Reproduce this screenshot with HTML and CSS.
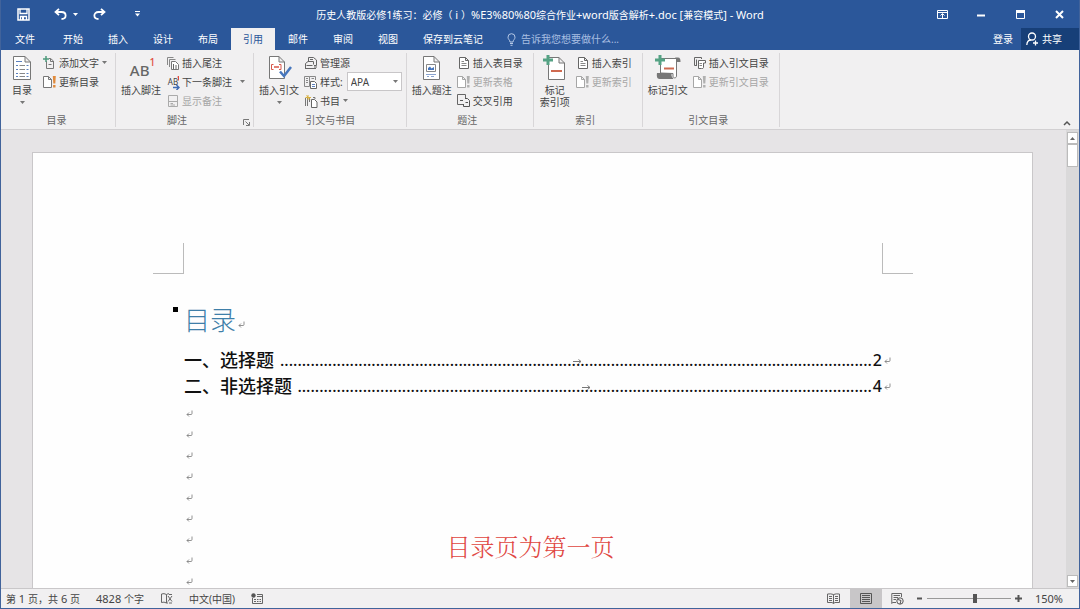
FILE: index.html
```html
<!DOCTYPE html>
<html lang="zh-CN">
<head>
<meta charset="utf-8">
<title>Word</title>
<link rel="stylesheet" href="styles.css">
</head>
<body>
<svg class="defs" aria-hidden="true">
  <symbol id="ret" viewBox="0 0 7 7"><path d="M6 .5V3.500Q6 4.500 5 4.500H1M3 2.500 1 4.500 3 6.500" fill="none" stroke="currentColor" stroke-width=".8"/></symbol>
  <symbol id="tabarrow" viewBox="0 0 9 5"><path d="M0 2.500H8M5.500.5 8 2.500 5.500 4.500" fill="none" stroke="currentColor"/></symbol>
  <symbol id="down" viewBox="0 0 5 3"><path d="M0 0H5L2.500 3Z" fill="currentColor"/></symbol>
  <symbol id="update" viewBox="0 0 14 14"><path d="M.5 1.500H5.500L8.500 4.500V12.500H.5ZM5.500 1.500V4.500H8.500" fill="#fff" stroke="currentColor"/><path d="M9.800 1h3l-.5 7.500h-2zM10.100 10h2.400v2.500h-2.400z" fill="var(--mark)"/></symbol>
  <symbol id="list" viewBox="0 0 14 14"><path d="M2.500 1.500H8.500L11.500 4.500V12.500H2.500ZM8.500 1.500V4.500H11.500" fill="#fff" stroke="#666"/><path d="M4.500 5.500H7M4.500 7.500H9.500M4.500 9.500H9.500" stroke="#888"/></symbol>
</svg>
<div class="window">
  <header class="titlebar">
    <div class="quick">
      <button aria-label="保存"><svg width="13" height="13" viewBox="0 0 13 13"><path d="M1 1H12V12H1Z" fill="none" stroke="#fff" stroke-width="1.500"/><path d="M3 1V5.500H10V1M3.500 12V8.500H9.500V12" fill="none" stroke="#fff" stroke-width="1.300"/><path d="M5 9h2v3H5z" fill="#fff"/></svg></button>
      <button class="undo" aria-label="撤消"><svg width="13" height="12" viewBox="0 0 13 12"><path d="M5 .8 1.500 4 5 7.200M2 4H7.500C13 4 13 11 7.500 11" fill="none" stroke="#fff" stroke-width="1.800"/></svg><svg class="caret" width="5" height="3"><use href="#down"/></svg></button>
      <button aria-label="恢复"><svg width="13" height="12" viewBox="0 0 13 12"><path d="M8 .8 11.500 4 8 7.200M11 4H5.500C0 4 0 11 5.500 11" fill="none" stroke="#fff" stroke-width="1.800"/></svg></button>
      <button class="more" aria-label="自定义快速访问工具栏"><svg width="5" height="6" viewBox="0 0 5 6"><path d="M0 .5H5" stroke="#fff"/><path d="M0 2.500H5L2.500 5.500Z" fill="#fff"/></svg></button>
    </div>
    <h1>历史人教版必修<span class="latin">1</span>练习：必修（<span class="latin"> i </span>）<span class="latin">%E3%80%80</span>综合作业<span class="latin">+word</span>版含解析<span class="latin">+.doc [</span>兼容模式<span class="latin">] - Word</span></h1>
    <div class="controls">
      <button aria-label="功能区显示选项"><svg width="11" height="9" viewBox="0 0 11 9"><path d="M.5.5H10.500V8.500H.5ZM.5 2.500H10.500M5.500 8V4M3.500 5.500 5.500 3.500 7.500 5.500" fill="none" stroke="#fff"/></svg></button>
      <button aria-label="最小化"><svg width="9" height="9"><path d="M0 5.500H8" stroke="#fff" stroke-width="2"/></svg></button>
      <button aria-label="最大化"><svg width="9" height="9"><path d="M.5.5H8.500V8.500H.5Z" fill="none" stroke="#fff"/><path d="M0 0H9V3H0Z" fill="#fff"/></svg></button>
      <button aria-label="关闭"><svg width="9" height="9"><path d="M1 1 8 8M8 1 1 8" stroke="#fff" stroke-width="2"/></svg></button>
    </div>
  </header>
  <nav class="tabs">
    <button class="file">文件</button><button>开始</button><button>插入</button><button>设计</button><button>布局</button><button class="active">引用</button><button>邮件</button><button>审阅</button><button>视图</button><button>保存到云笔记</button>
    <label class="tell"><svg width="9" height="13" viewBox="0 0 9 13"><path d="M3 9C3 7 1 6.500 1 4.200A3.500 3.500 0 0 1 8 4.200C8 6.500 6 7 6 9ZM3 10.500H6M3.500 12.300H5.500" fill="none" stroke="#b5c8e6"/></svg><input type="text" aria-label="告诉我您想要做什么" placeholder="告诉我您想要做什么..."></label>
    <button class="login">登录</button>
    <button class="share"><svg width="13" height="14" viewBox="0 0 13 14"><circle cx="6" cy="4.500" r="3.500" fill="none" stroke="#fff" stroke-width="1.300"/><path d="M.8 13C1 9.500 3 8 5 8M9.500 8.500V13.500M7 11H12" fill="none" stroke="#fff" stroke-width="1.300"/></svg>共享</button>
  </nav>
  <section class="ribbon">
    <div class="group">
      <div class="tools">
        <button class="large"><svg width="20" height="26" viewBox="0 0 20 26"><path d="M1.500 1.500H13L18.500 7V24.500H1.500ZM13 1.500V7H18.500" fill="#fff" stroke="#777"/><path d="M4 6.500H10M4 10.500H6M4 14.500H6M4 18.500H6M4 21.500H6" stroke="#5b7fbd"/><path d="M7.500 10.500H13M7.500 14.500H13M7.500 18.500H13M7.500 21.500H13" stroke="#888"/><path d="M14.500 10.500H16.500M14.500 14.500H16.500M14.500 18.500H16.500M14.500 21.500H16.500" stroke="#5b7fbd"/></svg><span>目录</span><svg class="caret" width="5" height="3"><use href="#down"/></svg></button>
        <div class="column">
          <button class="small"><svg width="14" height="14" viewBox="0 0 14 14"><path d="M3.500 5V12.500H10.500V5L7.500 2.500H6M7.500 2.500V5.500H10.500M5.500 8.500H8.500" fill="none" stroke="#777"/><path d="M3 0V6M0 3H6" stroke="#4e9a7c" stroke-width="1.500"/></svg>添加文字<svg class="caret" width="5" height="3"><use href="#down"/></svg></button>
          <button class="small"><svg class="hot" width="14" height="14"><use href="#update"/></svg>更新目录</button>
        </div>
      </div>
      <h2>目录</h2>
    </div>
    <div class="group notes">
      <div class="tools">
        <button class="large"><span class="ab">AB<sup>1</sup></span><span>插入脚注</span></button>
        <div class="column">
          <button class="small"><svg width="14" height="14" viewBox="0 0 14 14"><path d="M1.500 9V1.500H7.500M3.500 11V3.500H9.500" fill="none" stroke="#888"/><path d="M5.500 5.500H9.500L12.500 8.500V13.500H5.500Z" fill="#fff" stroke="#777"/><path d="M7.500 8V13M10 9V13" stroke="#666"/></svg>插入尾注</button>
          <button class="small wide"><span class="abmini">AB<svg width="14" height="14" viewBox="0 0 14 14"><path d="M12.500 0V4.500M11.300 1.200 12.500.5" stroke="#e04c3e"/><path d="M7 11.500H13M10.500 9 13 11.500 10.500 14" fill="none" stroke="#3f6cb4" stroke-width="1.500"/></svg></span>下一条脚注<svg class="caret" width="5" height="3"><use href="#down"/></svg></button>
          <button class="small" disabled><svg width="14" height="14" viewBox="0 0 14 14"><path d="M2.500 1.500H11.500V12.500H2.500ZM2.500 7.500H11.500M4.500 9.500H7M4.500 11H9" fill="none" stroke="#aaa"/></svg>显示备注</button>
        </div>
      </div>
      <h2>脚注</h2>
      <button class="launcher" aria-label="脚注和尾注"><svg width="7" height="7"><path d="M.5 6V.5H6M2.500 2.500 6 6M6.500 3V6.500H3" fill="none" stroke="#777"/></svg></button>
    </div>
    <div class="group cite">
      <div class="tools">
        <button class="large"><svg width="26" height="26" viewBox="0 0 26 26"><path d="M3.500 1.500H13L18.500 7V23.500H3.500ZM13 1.500V7H18.500" fill="#fff" stroke="#777"/><path d="M7.500 9.500H5.500V14.500H7.500M13 9.500H15V14.500H13" fill="none" stroke="#d8574a"/><path d="M8 12H13" stroke="#d8574a" stroke-width="1.500"/><path d="M14 16.500 18 21 25 12" fill="none" stroke="#4676bd" stroke-width="2.500"/></svg><span>插入引文</span><svg class="caret" width="5" height="3"><use href="#down"/></svg></button>
        <div class="column">
          <button class="small"><svg width="14" height="14" viewBox="0 0 14 14"><path d="M4.500 6V1.500H9.500L12.500 4V9.500H10M1.500 7.500L4 5.500H9.500V8.500M1 12.500H12M2.500 9.500H8.500M1.500 7.500V12.500" fill="none" stroke="#666"/><path d="M6 3.500H9M10 11H13" stroke="#666"/></svg>管理源</button>
          <div class="small"><svg width="14" height="14" viewBox="0 0 14 14"><path d="M.5 1.500H5.500V11.500H.5ZM5.500 1.500H11.500V5M2 3.500H4M2 5.500H4M2 7.500H4M7.500 3.500H10" fill="none" stroke="#888"/><path d="M6.500 6.500H10.500L12.500 8.500V13.500H6.500Z" fill="#fff" stroke="#666"/><path d="M8 9.500H11M8 11.500H11" stroke="#5b7fbd"/></svg><label for="style">样式:</label><span class="pick"><select id="style"><option>APA</option></select><svg class="caret" width="5" height="3"><use href="#down"/></svg></span></div>
          <button class="small"><svg width="14" height="14" viewBox="0 0 14 14"><path d="M1.500 4V12M3.500 4V12M5.500 4V8" stroke="#777"/><path d="M4 1V6M1.500 3.500H7M2.500 1.500 6 5.500" stroke="#d9b03c"/><path d="M7.500 5.500H10.500L13 8V13.500H7.500Z" fill="#fff" stroke="#666"/><path d="M9 3.500H11V5" fill="none" stroke="#777"/></svg>书目<svg class="caret" width="5" height="3"><use href="#down"/></svg></button>
        </div>
      </div>
      <h2>引文与书目</h2>
    </div>
    <div class="group roomy">
      <div class="tools">
        <button class="large"><svg width="20" height="26" viewBox="0 0 20 26"><path d="M1.500 1.500H12L17.500 7V24.500H1.500ZM12 1.500V7H17.500" fill="#fff" stroke="#777"/><path d="M4.500 9.500H13.500V16.500H4.500Z" fill="none" stroke="#888"/><path d="M6 15V13L8 11.500 9.500 13.500 12 12V15Z" fill="#4676bd"/><path d="M4 19.500H14M5 21.500H7M9 21.500H12" stroke="#8aa3cf"/></svg><span>插入题注</span></button>
        <div class="column">
          <button class="small"><svg width="14" height="14"><use href="#list"/></svg>插入表目录</button>
          <button class="small" disabled><svg width="14" height="14"><use href="#update"/></svg>更新表格</button>
          <button class="small"><svg width="14" height="14" viewBox="0 0 14 14"><path d="M6 10.500H.5V.5H8.500V4" fill="none" stroke="#666"/><path d="M8 4.500H10.500L12.500 6.500V12.500H6.500V10M3 6.500H6M8.500 8.500H11" fill="none" stroke="#555"/></svg>交叉引用</button>
        </div>
      </div>
      <h2>题注</h2>
    </div>
    <div class="group roomy">
      <div class="tools">
        <button class="large"><svg width="24" height="26" viewBox="0 0 24 26"><path d="M5.500 2.500H16L21.500 8V24.500H5.500ZM16 2.500V8H21.500" fill="#fff" stroke="#777"/><path d="M5 0V10M0 5H10" stroke="#55a284" stroke-width="3"/><path d="M8 16H19" stroke="#cf6a50" stroke-width="2"/></svg><span>标记<br>索引项</span></button>
        <div class="column">
          <button class="small"><svg width="14" height="14"><use href="#list"/></svg>插入索引</button>
          <button class="small" disabled><svg width="14" height="14"><use href="#update"/></svg>更新索引</button>
        </div>
      </div>
      <h2>索引</h2>
    </div>
    <div class="group roomy">
      <div class="tools">
        <button class="large"><svg width="26" height="26" viewBox="0 0 26 26"><path d="M5.500 18V3.500H21.500V21C21.500 23.500 18 23.500 18 21V18.500Z" fill="#fff" stroke="#777"/><path d="M20 2.500H23C25 2.500 25.500 4 25.500 7H21.500V4Z" fill="#777"/><path d="M2 18H16.500V21L18.500 24H4.500C2 24 1.500 21 2 18Z" fill="#777"/><path d="M5 0V10M0 5H10" stroke="#55a284" stroke-width="3"/><path d="M9 13.500H19" stroke="#cf6a50" stroke-width="2"/></svg><span>标记引文</span></button>
        <div class="column">
          <button class="small"><svg width="14" height="14" viewBox="0 0 14 14"><path d="M4 9.500H1.500V1.500H8.500V3M3.500 3.500V10" fill="none" stroke="#666"/><path d="M5.500 4.500H12.500V7H10.500V11.500Q10 13 8.500 12.500H5.500Z" fill="#fff" stroke="#666"/><path d="M6.500 7.500H9M6.500 9.500H9" stroke="#888"/></svg>插入引文目录</button>
          <button class="small" disabled><svg width="14" height="14"><use href="#update"/></svg>更新引文目录</button>
        </div>
      </div>
      <h2>引文目录</h2>
    </div>
    <button class="collapse" aria-label="折叠功能区"><svg width="8" height="6"><path d="M1 5 4 2 7 5" fill="none" stroke="#555" stroke-width="1.500"/></svg></button>
  </section>
  <main class="workspace">
    <article class="page">
      <div class="crops"><span class="crop left"></span><span class="crop right"></span></div>
      <div class="text">
        <h3><span class="bullet"></span>目录<svg width="7" height="7"><use href="#ret"/></svg></h3>
        <p class="entry"><span>一、选择题</span><span class="leader"><span class="dots">........................................................................................................................................</span><svg width="9" height="5"><use href="#tabarrow"/></svg></span><span class="num">2</span><svg width="7" height="7"><use href="#ret"/></svg></p>
        <p class="entry"><span>二、非选择题</span><span class="leader"><span class="dots">....................................................................................................................................</span><svg width="9" height="5"><use href="#tabarrow"/></svg></span><span class="num">4</span><svg width="7" height="7"><use href="#ret"/></svg></p>
        <p class="blank"><svg width="7" height="7"><use href="#ret"/></svg></p>
        <p class="blank"><svg width="7" height="7"><use href="#ret"/></svg></p>
        <p class="blank"><svg width="7" height="7"><use href="#ret"/></svg></p>
        <p class="blank"><svg width="7" height="7"><use href="#ret"/></svg></p>
        <p class="blank"><svg width="7" height="7"><use href="#ret"/></svg></p>
        <p class="blank"><svg width="7" height="7"><use href="#ret"/></svg></p>
        <p class="blank"><svg width="7" height="7"><use href="#ret"/></svg></p>
        <p class="blank"><svg width="7" height="7"><use href="#ret"/></svg></p>
        <p class="blank"><svg width="7" height="7"><use href="#ret"/></svg></p>
      </div>
      <p class="note">目录页为第一页</p>
    </article>
    <div class="scrollbar">
      <button aria-label="向上滚动"><svg class="up" width="5" height="3"><use href="#down"/></svg></button>
      <span class="thumb"></span>
      <button class="end" aria-label="向下滚动"><svg width="5" height="3"><use href="#down"/></svg></button>
    </div>
  </main>
  <footer class="status">
    <span>第<span class="latin"> 1 </span>页，共<span class="latin"> 6 </span>页</span>
    <span><span class="latin">4828 </span>个字</span>
    <button aria-label="校对"><svg width="13" height="11" viewBox="0 0 13 11"><path d="M6.500 1.500V10M6.500 1.500Q4 0 1.500 1V9.500Q4 8.500 6.500 10M6.500 1.500Q8 .5 9 .8M6.500 10H8M8 3 12 8.500M12 3 8 8.500M9 1.500H12M9 10H12" fill="none" stroke="#666"/></svg></button>
    <span>中文(中国)</span>
    <button aria-label="宏"><svg width="12" height="11" viewBox="0 0 12 11"><path d="M1.500 5V10.500H11.500V1.500H6M6 3.500H11M3 6.500H5M6 6.500H7.500M8.500 6.500H10M3 8.500H5M6 8.500H7.500M8.500 8.500H10" fill="none" stroke="#666"/><circle cx="2.500" cy="2.500" r="2.200" fill="#555"/></svg></button>
    <div class="views">
      <button aria-label="阅读视图"><svg width="13" height="11" viewBox="0 0 13 11"><path d="M6.500 1.500V10.500M6.500 1.500Q4 .5.5 1V9.500H5L6.500 10.500 8 9.500H12.500V1Q9 .5 6.500 1.500M2 3.500H5M2 5.500H5M2 7.500H5M8 3.500H11M8 5.500H11M8 7.500H11" fill="none" stroke="#666"/></svg></button>
      <button class="on" aria-label="页面视图"><svg width="12" height="11" viewBox="0 0 12 11"><path d="M.5.5H11.500V10.500H.5ZM2 2.500H10M2 4.500H10M2 6.500H10M2 8.500H10" fill="none" stroke="#555"/></svg></button>
      <button aria-label="Web 版式视图"><svg width="13" height="12" viewBox="0 0 13 12"><path d="M5 9.500H1.500L.8 10.500V.5H10.500V4M2.500 2.500H9M2.500 4.500H7M2.500 6.500H5" fill="none" stroke="#666"/><circle cx="9" cy="8" r="3.200" fill="none" stroke="#555"/><path d="M7 6.500 10 7.500 9 11" fill="none" stroke="#555"/></svg></button>
    </div>
    <div class="zoom">
      <button aria-label="缩小"><svg width="7" height="7"><path d="M1 3.500H6" stroke="#555" stroke-width="2"/></svg></button>
      <input type="range" aria-label="缩放" min="0" max="100" value="57">
      <button aria-label="放大"><svg width="7" height="7"><path d="M0 3.500H7M3.500 0V7" stroke="#555" stroke-width="2"/></svg></button>
    </div>
    <span class="latin">150%</span>
  </footer>
</div>
</body>
</html>
```

FILE: styles.css
```css
* {
  box-sizing: border-box;
}

body {
  margin: 0;
  font-family: "Noto Sans", "Noto Sans CJK SC", sans-serif;
  font-size: 10px;
  line-height: 14px;
  color: #444;
}

button,
input,
select {
  margin: 0;
  padding: 0;
  border: 0;
  background: none;
  color: inherit;
  font: inherit;
}

button,
label,
.small {
  display: flex;
  align-items: center;
}

button {
  justify-content: center;
}

h1,
h2,
h3,
p {
  margin: 0;
  font-weight: 400;
}

svg {
  display: block;
  flex: none;
}

.defs {
  position: absolute;
  width: 0;
  height: 0;
}

.latin {
  font-size: 11px;
  white-space: pre;
}

.window {
  display: flex;
  flex-direction: column;
  height: 100vh;
  overflow: hidden;
  border: 1px solid #41639b;
  border-top: 0;
  background: #f1f0f1;
}

/* Title bar */
.titlebar {
  display: grid;
  grid-template-columns: 1fr auto 1fr;
  align-items: center;
  height: 28px;
  background: #2b579a;
  color: #fff;
}

.titlebar h1 {
  font-size: 10px;
  padding-top: 2px;
  white-space: nowrap;
}

.quick {
  display: flex;
  align-items: center;
  padding-left: 16px;
}

.undo {
  gap: 6px;
  margin: 0 15px 0 24px;
}

.more {
  margin-left: 29px;
}

.controls {
  display: flex;
  justify-content: flex-end;
}

.controls button {
  width: 39px;
  height: 28px;
}

/* Tabs */
.tabs {
  display: flex;
  height: 22px;
  padding-left: 2px;
  background: #2b579a;
  color: #fff;
}

.tabs button {
  padding: 0 12px;
  margin-right: 1px;
  white-space: nowrap;
}

.tabs .file {
  margin-right: 4px;
}

.tabs .active {
  background: #f1f0f1;
  color: #2b579a;
}

.tell {
  flex: 1;
  gap: 5px;
  padding-left: 11px;
}

.tell input {
  width: 160px;
}

.tell input::placeholder {
  color: #a9bfe2;
  opacity: 1;
}

.tabs .login {
  padding: 0 7px;
}

.tabs .share {
  gap: 3px;
  padding: 0 17px 0 5px;
  margin: 0;
  background: #173f78;
}

/* Ribbon */
.ribbon {
  display: flex;
  height: 80px;
  padding-top: 3px;
  border-bottom: 1px solid #d2d0d2;
}

.group {
  position: relative;
  display: flex;
  flex-direction: column;
  padding: 0 8px 0 5px;
  margin-bottom: 2px;
  border-right: 1px solid #d8d6d8;
}

.group.cite {
  padding-right: 4px;
}

.group.roomy {
  padding-right: 10px;
}

.tools {
  display: flex;
  gap: 5px;
  height: 58px;
}

.group h2 {
  padding-top: 3px;
  font-size: 10px;
  text-align: center;
  color: #666;
}

.notes h2 {
  padding-right: 12px;
}

.large {
  flex-direction: column;
  justify-content: flex-start;
  min-width: 32px;
  padding-top: 2px;
  line-height: 12px;
  white-space: nowrap;
}

.large > svg:first-child,
.ab {
  height: 26px;
  margin-bottom: 3px;
}

.large .caret {
  margin-top: 5px;
}

.ab {
  display: flex;
  padding: 7px 0 0 3px;
  font-size: 15px;
  font-weight: 500;
  line-height: 16px;
  color: #666;
}

.ab sup {
  margin-top: -6px;
  font-size: 10px;
  line-height: 12px;
  color: #e04c3e;
}

.small {
  justify-content: flex-start;
  gap: 2px;
  height: 19px;
  white-space: nowrap;
}

.small .caret {
  margin-left: 1px;
}

.small.wide .caret {
  margin-left: 6px;
}

.small:disabled {
  color: #a6a6a6;
  --mark: #b0b0b0;
}

.hot {
  color: #777;
  --mark: #e08a3c;
}

.abmini {
  position: relative;
  width: 14px;
  font-size: 8px;
  line-height: 12px;
}

.abmini svg {
  position: absolute;
  top: 0;
  left: 0;
}

.caret {
  color: #777;
}

.titlebar .caret {
  color: #fff;
}

.pick {
  position: relative;
  margin-left: 2px;
}

.pick select {
  display: block;
  width: 55px;
  height: 19px;
  padding-left: 3px;
  border: 1px solid #c8c6c8;
  background: #fff;
  appearance: none;
}

.pick .caret {
  position: absolute;
  top: 8px;
  right: 4px;
}

.launcher {
  position: absolute;
  right: 3px;
  bottom: 1px;
}

.collapse {
  align-self: flex-end;
  margin: 0 8px 3px auto;
}

/* Document */
.workspace {
  display: flex;
  flex: 1;
  min-height: 0;
  background: #e6e4e6;
}

.page {
  position: relative;
  flex: 1;
  min-width: 0;
  margin: 22px 33px 0 31px;
  overflow: hidden;
  border: 1px solid #c9c7c9;
  border-bottom: 0;
  background: #fefefe;
}

.crops {
  display: flex;
  justify-content: space-between;
  margin: 90px 119px 0 120px;
}

.crop {
  width: 31px;
  height: 31px;
  border-bottom: 1px solid #bbb;
}

.crop.left {
  border-right: 1px solid #bbb;
}

.crop.right {
  border-left: 1px solid #bbb;
}

.text {
  padding: 24px 141px 0 151px;
  color: #111;
}

.text svg {
  color: #777;
}

.text h3 {
  position: relative;
  display: flex;
  align-items: center;
  gap: 2px;
  height: 44px;
  margin-bottom: 5px;
  font-size: 26px;
  font-weight: 300;
  line-height: 40px;
  color: #3f7fa9;
}

.text h3 svg {
  margin-top: 8px;
}

.bullet {
  position: absolute;
  top: 9px;
  left: -11px;
  width: 5px;
  height: 5px;
  background: #000;
}

.entry {
  display: flex;
  align-items: center;
  gap: 1px;
  height: 26px;
  font-size: 18px;
  line-height: 26px;
  font-weight: 500;
  white-space: nowrap;
}

.leader {
  position: relative;
  flex: 1;
  min-width: 0;
  font-size: 16px;
}

.num {
  margin-right: 1px;
  font-size: 16px;
}

.dots {
  display: block;
  overflow: hidden;
  text-align: right;
}

.leader svg {
  position: absolute;
  top: 12px;
  left: 50%;
}

.blank {
  display: flex;
  align-items: center;
  height: 21px;
  padding-left: 2px;
}

.entry + .blank {
  margin-top: 4px;
}

.note {
  position: absolute;
  top: 375px;
  left: 0;
  right: 4px;
  font-family: "Noto Serif CJK SC", "Noto Sans CJK SC", serif;
  font-size: 24px;
  font-weight: 300;
  line-height: 36px;
  text-align: center;
  color: #e0453f;
}

/* Scrollbar */
.scrollbar {
  display: flex;
  flex-direction: column;
  width: 13px;
  padding: 2px 1px 1px;
  background: #dad9da;
}

.scrollbar button {
  height: 12px;
  border: 1px solid #bbb;
  background: #fff;
  color: #666;
}

.scrollbar .up {
  transform: rotate(180deg);
}

.scrollbar .end {
  margin-top: auto;
}

.thumb {
  height: 23px;
  border: 1px solid #bbb;
  background: #fff;
}

/* Status bar */
.status {
  display: flex;
  align-items: center;
  gap: 16px;
  height: 20px;
  padding: 0 16px 0 5px;
  border-top: 1px solid #c9c7c9;
  white-space: nowrap;
}

.views {
  display: flex;
  align-self: stretch;
  margin-left: auto;
}

.views button {
  width: 32px;
}

.views .on {
  background: #c8c6c8;
}

.zoom {
  display: flex;
  align-items: center;
  gap: 4px;
  margin: 0 -3px 0 -14px;
}

.zoom input {
  width: 84px;
  height: 10px;
  appearance: none;
  background: linear-gradient(#999, #999) center / 100% 1px no-repeat;
}

.zoom input::-webkit-slider-thumb {
  appearance: none;
  width: 4px;
  height: 9px;
  background: #555;
}
```
